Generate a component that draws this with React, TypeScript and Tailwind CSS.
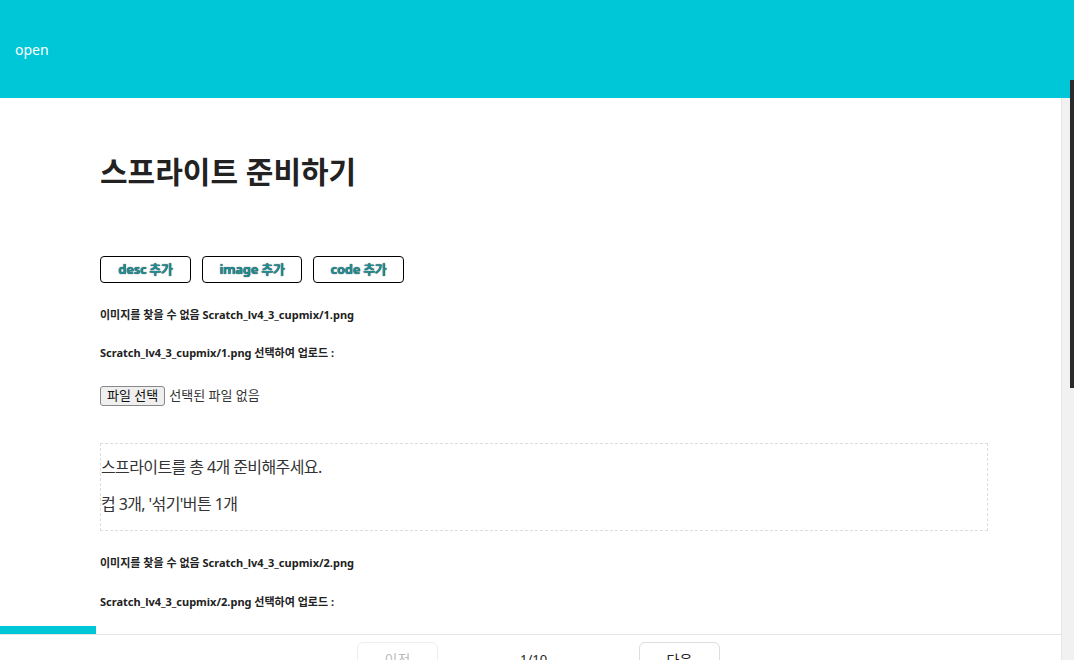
const font = { fontFamily: '"Noto Sans", "Noto Sans CJK KR", sans-serif' };

function SmallLine({ children }: { children: React.ReactNode }) {
    return <p className="text-[11px] font-bold text-[#222] leading-[16px]">{children}</p>;
}

function AddButton({ label, width }: { label: string; width: string }) {
    return (
        <button
            className={`${width} h-[27px] rounded-[4px] border border-black bg-white text-[13px] font-bold text-[#1f8f97] tracking-[-0.3px]`}
            style={{ textShadow: "0 0 1px #000" }}
        >
            {label}
        </button>
    );
}

export default function App() {
    return (
        <div className="relative w-[1074px] h-[660px] overflow-hidden bg-white flex flex-col" style={font}>
            <header className="h-[98px] shrink-0 bg-[#00c7d8] flex items-center px-[15px]">
                <span className="text-white text-[14px]">open</span>
            </header>

            <div className="flex-1 flex min-h-0">
                <div className="flex-1 flex flex-col min-w-0">
                    <main className="flex-1 overflow-hidden pl-[100px] pr-[73px] pt-[54px]">
                        <h1 className="text-[30px] font-bold text-[#222] leading-[40px]">
                            스프라이트 준비하기
                        </h1>

                        <div className="flex gap-[11px] mt-[64px]">
                            <AddButton label="desc 추가" width="w-[91px]" />
                            <AddButton label="image 추가" width="w-[100px]" />
                            <AddButton label="code 추가" width="w-[91px]" />
                        </div>

                        <div className="mt-[24px] flex flex-col gap-[22px]">
                            <SmallLine>이미지를 찾을 수 없음 Scratch_lv4_3_cupmix/1.png</SmallLine>
                            <SmallLine>Scratch_lv4_3_cupmix/1.png 선택하여 업로드 :</SmallLine>
                        </div>

                        <div className="mt-[25px] flex items-center gap-[4px] text-[13px] text-[#333]">
                            <span className="h-[20px] px-[6px] flex items-center rounded-[3px] border border-[#888] bg-[#efefef] text-[#111]">
                                파일 선택
                            </span>
                            <span>선택된 파일 없음</span>
                        </div>

                        <div className="mt-[37px] border border-dashed border-[#ddd] pt-[11px] pb-[14px] flex flex-col gap-[13px] text-[16px] text-[#333] leading-[24px] tracking-[-0.6px]">
                            <p>스프라이트를 총 4개 준비해주세요.</p>
                            <p>컵 3개, '섞기'버튼 1개</p>
                        </div>

                        <div className="mt-[24px] flex flex-col gap-[23px]">
                            <SmallLine>이미지를 찾을 수 없음 Scratch_lv4_3_cupmix/2.png</SmallLine>
                            <SmallLine>Scratch_lv4_3_cupmix/2.png 선택하여 업로드 :</SmallLine>
                        </div>
                    </main>

                    <footer className="shrink-0 h-[34px]">
                        <div className="h-[8px] w-[96px] bg-[#00c7d8]" />
                        <div className="border-t border-[#e5e5e5] flex justify-center gap-[201px] pt-[7px] pl-[16px]">
                            <button className="w-[81px] h-[40px] rounded-[6px] border border-[#eee] text-[14px] text-[#bbb] pb-[6px]">
                                이전
                            </button>
                            <span className="absolute left-[520px] top-[650px] text-[13px] text-[#222]">1/10</span>
                            <button className="w-[81px] h-[40px] rounded-[6px] border border-[#ddd] text-[14px] text-[#222] pb-[6px]">
                                다음
                            </button>
                        </div>
                    </footer>
                </div>

                <div className="w-[13px] shrink-0 bg-[#f1f1f1] border-l border-[#e6e6e6]" />
            </div>

            <div className="absolute right-0 top-[80px] w-[4px] h-[308px] bg-[#2b2b2e]" />
        </div>
    );
}
